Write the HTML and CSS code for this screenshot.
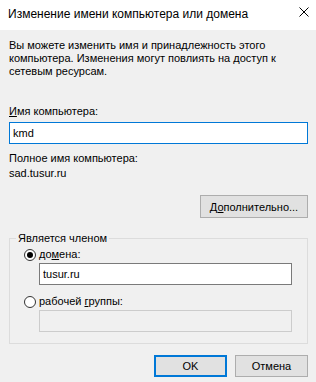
FILE: index.html
```html
<!DOCTYPE html>
<html lang="ru">
<head>
  <meta charset="UTF-8" />
  <title>Изменение имени компьютера или домена</title>
  <link rel="stylesheet" href="styles.css">
</head>
<body>
  <div class="titlebar">
    <span class="title">Изменение имени компьютера или домена</span>
    <svg class="close" width="10" height="10" viewBox="0 0 10 10">
      <path d="M0.5 0.5 L9.5 9.5 M9.5 0.5 L0.5 9.5" stroke="#000" stroke-width="1" fill="none" />
    </svg>
  </div>

  <div class="content">
    <p class="intro">Вы можете изменить имя и принадлежность этого<br>компьютера. Изменения могут повлиять на доступ к<br>сетевым ресурсам.</p>

    <label class="field-label" for="computer-name"><u>И</u>мя компьютера:</label>
    <input class="text-input focused" id="computer-name" type="text" value="kmd" />

    <div class="info-label">Полное имя компьютера:</div>
    <div class="info-value">sad.tusur.ru</div>

    <div class="more-row">
      <button class="btn btn-more">Д<u>о</u>полнительно...</button>
    </div>

    <fieldset class="member">
      <legend>Является членом</legend>
      <label class="radio-row"><span class="radio checked"></span><span>до<u>м</u>ена:</span></label>
      <input class="text-input sub" type="text" value="tusur.ru" />
      <label class="radio-row second"><span class="radio"></span><span>рабочей <u>г</u>руппы:</span></label>
      <input class="text-input sub" type="text" disabled />
    </fieldset>

    <div class="actions">
      <button class="btn btn-default">OK</button>
      <button class="btn">Отмена</button>
    </div>
  </div>
</body>
</html>
```

FILE: styles.css
```css
body {
  margin: 0;
  background-color: #f0f0f0;
  font-family: "Liberation Sans", Arial, sans-serif;
  font-size: 11px;
  color: #000;
}
.titlebar {
  height: 30px;
  box-sizing: border-box;
  background: #fff;
  display: flex;
  align-items: flex-start;
  justify-content: space-between;
  padding: 6px 7px 0 8px;
}
.title {
  font-size: 12px;
  line-height: 16px;
}
.close {
  margin-top: 1px;
}
.content {
  padding: 9px 8px 0 9px;
}
.intro {
  margin: 0;
  line-height: 13px;
}
.field-label {
  display: block;
  margin-top: 27px;
  line-height: 13px;
}
.text-input {
  display: block;
  box-sizing: border-box;
  width: 100%;
  height: 22px;
  margin: 4px 0 0;
  padding: 0 3px;
  border: 1px solid #7a7a7a;
  background: #fff;
  font: inherit;
  color: #000;
  outline: none;
}
.text-input.focused {
  border-color: #0078d7;
}
.text-input:disabled {
  background: #f0f0f0;
  border-color: #cccccc;
}
.info-label {
  margin-top: 8px;
  line-height: 13px;
}
.info-value {
  margin-top: 2px;
  line-height: 13px;
}
.more-row {
  display: flex;
  justify-content: flex-end;
  margin-top: 15px;
}
.btn {
  box-sizing: border-box;
  height: 22px;
  padding: 0 6px;
  background: #e1e1e1;
  border: 1px solid #adadad;
  font: inherit;
  font-size: 11px;
  color: #000;
}
.btn-more {
  width: 108px;
  height: 23px;
}
.member {
  margin: 14px 0 0;
  padding: 3px 14px 11px 14px;
  border: 1px solid #dcdcdc;
}
.member legend {
  margin-left: -8px;
  padding: 0 2px;
  line-height: 13px;
}
.radio-row {
  display: flex;
  align-items: center;
  gap: 3px;
  line-height: 13px;
}
.radio-row.second {
  margin-top: 10px;
}
.radio {
  box-sizing: border-box;
  width: 12px;
  height: 12px;
  border: 1px solid #333;
  border-radius: 50%;
  background: #fff;
  display: flex;
  align-items: center;
  justify-content: center;
}
.radio.checked::after {
  content: "";
  width: 6px;
  height: 6px;
  border-radius: 50%;
  background: #000;
}
.text-input.sub {
  width: 253px;
  margin-left: 15px;
  margin-top: 2px;
}
.actions {
  display: flex;
  justify-content: flex-end;
  gap: 8px;
  margin-top: 11px;
}
.actions .btn {
  width: 73px;
}
.btn-default {
  border: 2px solid #0078d7;
}
```
